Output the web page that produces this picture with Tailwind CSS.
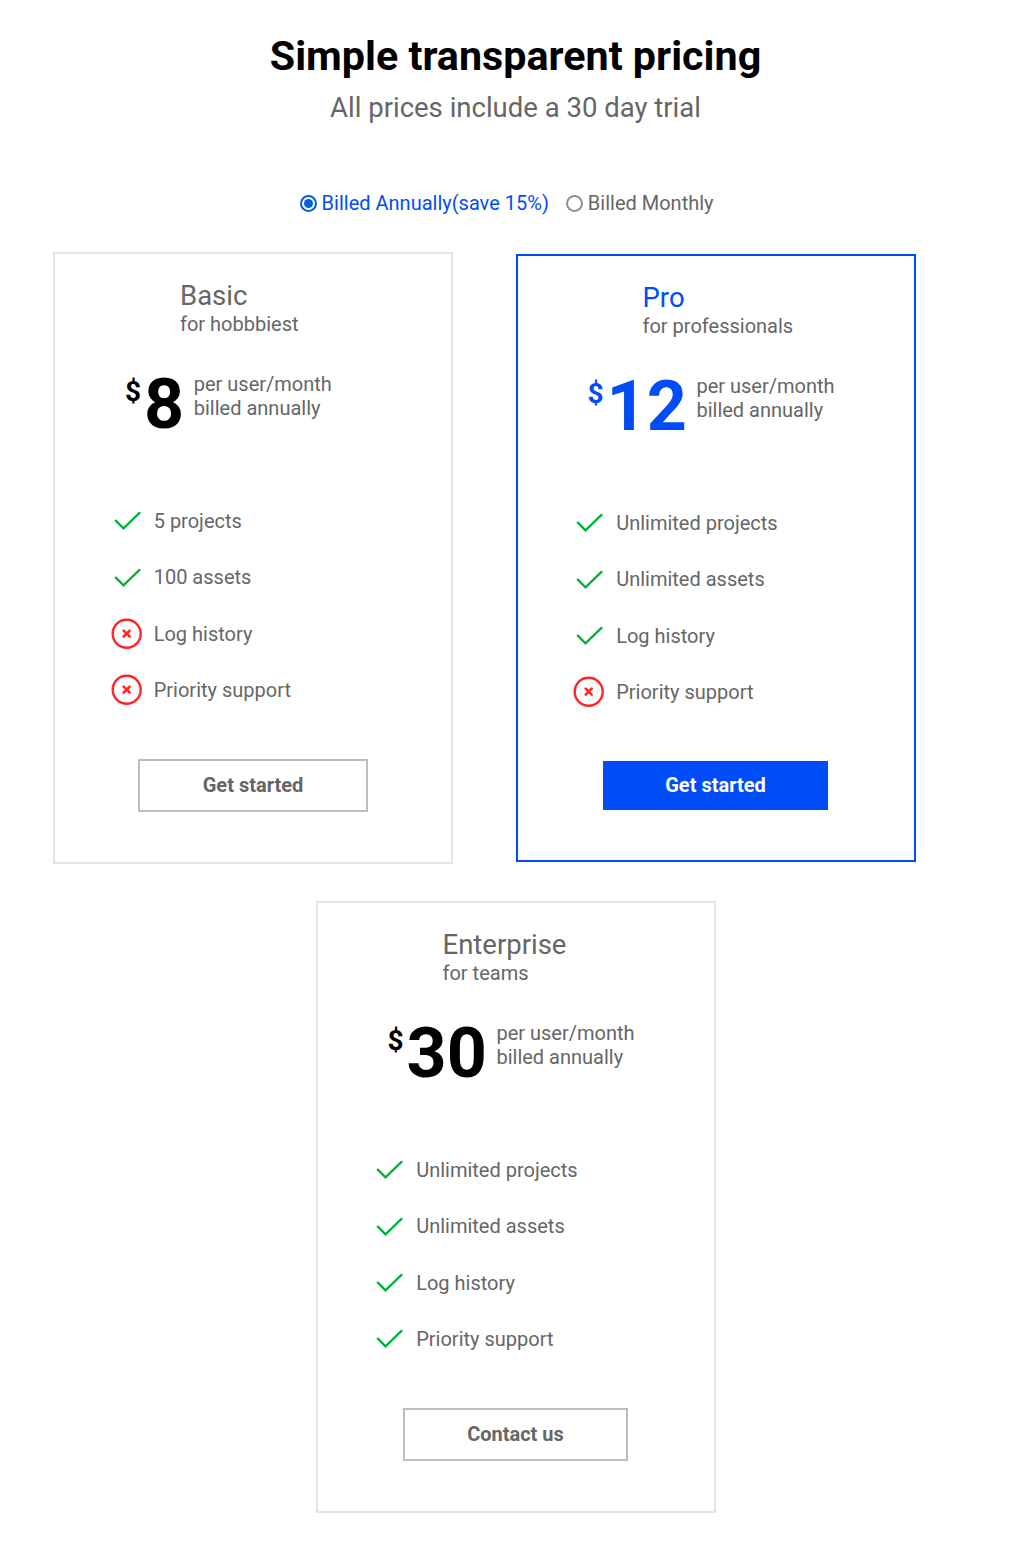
<!DOCTYPE html>
<html lang="en">
<head>
<meta charset="utf-8">
<title>Simple transparent pricing</title>
<script src="https://cdn.jsdelivr.net/npm/@tailwindcss/browser@4"></script>
</head>
<body class="bg-white font-['Roboto',sans-serif] text-[20px] leading-6 text-[#666]">
<svg class="hidden">
  <symbol id="check" viewBox="0 0 32 32"><path d="M4.8 15.6L12.5 23.4L28.5 7.9" fill="none" stroke="#00b33c" stroke-width="2.3" stroke-linecap="round" stroke-linejoin="miter"/></symbol>
  <symbol id="cross" viewBox="0 0 32 32"><circle cx="15.7" cy="15.7" r="14" fill="none" stroke="#ff2525" stroke-width="2.4"/><path d="M12.7 12.7L18.7 18.7M18.7 12.7L12.7 18.7" fill="none" stroke="#ff2525" stroke-width="2.6" stroke-linecap="round"/></symbol>
</svg>
<header class="pt-8 text-center">
  <h1 class="text-[41.25px] leading-[49px] font-bold text-black">Simple transparent pricing</h1>
  <p class="mt-[10px] text-[27.5px] leading-[33px]">All prices include a 30 day trial</p>
</header>
<div class="mt-[67px] ml-[300px] flex h-6 items-center">
  <svg class="mr-[4.6px] size-[17px]" viewBox="0 0 17 17"><circle cx="8.5" cy="8.5" r="7.5" fill="none" stroke="#0060df" stroke-width="2"/><circle cx="8.5" cy="8.5" r="4.5" fill="#0060df"/></svg>
  <span class="text-[#004df8]">Billed Annually(save 15%)</span>
  <svg class="mr-[4.6px] ml-[17.4px] size-[17px]" viewBox="0 0 17 17"><circle cx="8.5" cy="8.5" r="7.5" fill="none" stroke="#8f8f9d" stroke-width="2"/></svg>
  <span>Billed Monthly</span>
</div>
<main class="mt-[37px]">
  <div class="flex items-center gap-[62.5px] pl-[53px]">
    <section class="h-[612px] w-[400px] border-2 border-[#e5e5e5] pt-[25px]">
      <div class="pl-[125px]"><h2 class="text-[27.5px] leading-[33px]">Basic</h2><p>for hobbbiest</p></div>
      <div class="mt-9 flex h-[72px] items-start pl-[70px]">
        <span class="mt-[3px] w-[19px] text-[28px] leading-[33px] font-bold text-black">$</span>
        <span class="-mt-[3px] text-[70px] leading-[70px] font-bold text-black">8</span>
        <p class="ml-[9.6px]">per user/month<br>billed annually</p>
      </div>
      <ul class="mt-[49px] pl-[56px]">
        <li class="flex h-[56.33px] items-center gap-[10.7px]"><svg class="size-8"><use href="#check"/></svg>5 projects</li>
        <li class="flex h-[56.33px] items-center gap-[10.7px]"><svg class="mt-px size-8"><use href="#check"/></svg>100 assets</li>
        <li class="flex h-[56.33px] items-center gap-[10.7px]"><svg class="size-8"><use href="#cross"/></svg>Log history</li>
        <li class="flex h-[56.33px] items-center gap-[10.7px]"><svg class="size-8"><use href="#cross"/></svg>Priority support</li>
      </ul>
      <button class="mt-[40.7px] ml-[83px] block h-[53px] w-[230px] border-2 border-[#b8bfc4] pb-[2px] font-bold">Get started</button>
    </section>
    <section class="h-[608px] w-[400px] border-2 border-[#004df8] pt-[25px]">
      <div class="pl-[125px]"><h2 class="text-[27.5px] leading-[33px] text-[#004df8]">Pro</h2><p>for professionals</p></div>
      <div class="mt-9 flex h-[72px] items-start pl-[70px]">
        <span class="mt-[3px] w-[19px] text-[28px] leading-[33px] font-bold text-[#004df8]">$</span>
        <span class="-mt-[3px] text-[70px] leading-[70px] font-bold text-[#004df8]">12</span>
        <p class="ml-[9.6px]">per user/month<br>billed annually</p>
      </div>
      <ul class="mt-[49px] pl-[55.4px]">
        <li class="flex h-[56.33px] items-center gap-[11.3px]"><svg class="size-8"><use href="#check"/></svg>Unlimited projects</li>
        <li class="flex h-[56.33px] items-center gap-[11.3px]"><svg class="mt-px size-8"><use href="#check"/></svg>Unlimited assets</li>
        <li class="flex h-[56.33px] items-center gap-[11.3px]"><svg class="size-8"><use href="#check"/></svg>Log history</li>
        <li class="flex h-[56.33px] items-center gap-[11.3px]"><svg class="size-8"><use href="#cross"/></svg>Priority support</li>
      </ul>
      <button class="mt-[40.7px] ml-[85.5px] block h-[49px] w-[225px] bg-[#004df8] pb-[2px] font-bold text-white">Get started</button>
    </section>
  </div>
  <div class="mt-[37px] flex justify-center">
    <section class="h-[612px] w-[400px] border-2 border-[#e5e5e5] pt-[25px]">
      <div class="pl-[125px]"><h2 class="text-[27.5px] leading-[33px]">Enterprise</h2><p>for teams</p></div>
      <div class="mt-9 flex h-[72px] items-start pl-[70px]">
        <span class="mt-[3px] w-[19px] text-[28px] leading-[33px] font-bold text-black">$</span>
        <span class="-mt-[3px] text-[70px] leading-[70px] font-bold text-black">30</span>
        <p class="ml-[9.6px]">per user/month<br>billed annually</p>
      </div>
      <ul class="mt-[49px] pl-[55.4px]">
        <li class="flex h-[56.33px] items-center gap-[11.3px]"><svg class="size-8"><use href="#check"/></svg>Unlimited projects</li>
        <li class="flex h-[56.33px] items-center gap-[11.3px]"><svg class="mt-px size-8"><use href="#check"/></svg>Unlimited assets</li>
        <li class="flex h-[56.33px] items-center gap-[11.3px]"><svg class="size-8"><use href="#check"/></svg>Log history</li>
        <li class="flex h-[56.33px] items-center gap-[11.3px]"><svg class="size-8"><use href="#check"/></svg>Priority support</li>
      </ul>
      <button class="mt-[40.7px] ml-[85.5px] block h-[53px] w-[225px] border-2 border-[#b8bfc4] pb-[2px] font-bold">Contact us</button>
    </section>
  </div>
</main>
</body>
</html>
